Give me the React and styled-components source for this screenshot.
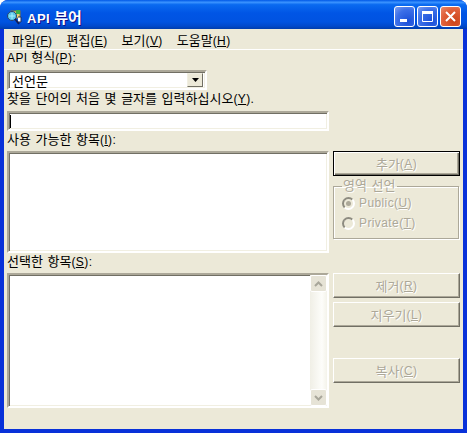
import React from 'react';
import styled, { createGlobalStyle } from 'styled-components';

const GlobalStyle = createGlobalStyle`
  html, body {
    margin: 0;
    padding: 0;
    background: #ffffff;
  }
`;

const FONT = '"Liberation Sans", "Noto Sans CJK KR", sans-serif';

const Window = styled.div`
  width: 467px;
  height: 433px;
  box-sizing: border-box;
  display: flex;
  flex-direction: column;
  overflow: hidden;
  border-radius: 8px 8px 0 0;
  background: #0831d9;
  font-family: ${FONT};
  font-size: 12px;
  letter-spacing: 0.4px;
  color: #000000;
`;

// Korean glyphs need a bigger size to get the advance of the bitmap font
const Ko = styled.span`
  font-size: ${props => props.$size || 13}px;
  letter-spacing: 0;
  word-spacing: 1px;
`;

const TitleBar = styled.div`
  height: 29px;
  flex: none;
  display: flex;
  align-items: center;
  padding: 4px 6px 0 6px;
  box-sizing: border-box;
  background: linear-gradient(180deg, #0058e6 0%, #3a93ff 8%, #0a6af0 16%, #0055e5 45%, #0053e1 75%, #0049cc 90%, #003dac 100%);
`;

const TitleText = styled.span`
  margin-left: 5px;
  flex: 1;
  color: #ffffff;
  font-weight: bold;
  font-size: 13px;
  letter-spacing: 0.5px;
  text-shadow: 1px 1px 0 #0f1089;
`;

const CaptionButton = styled.div`
  width: 21px;
  height: 21px;
  margin-left: 2px;
  box-sizing: border-box;
  border: 1px solid #ffffff;
  border-radius: 3px;
  display: flex;
  align-items: center;
  justify-content: center;
  background: ${props => (props.$close
    ? 'radial-gradient(circle at 70% 75%, #cc4419 0%, #e0603a 60%, #e98a6c 100%)'
    : 'radial-gradient(circle at 70% 75%, #1b4fd8 0%, #3c6fe8 60%, #7d9ff0 100%)')};
`;

const Body = styled.div`
  flex: 1;
  margin: 0 4px 4px;
  background: #ece9d8;
  display: flex;
  flex-direction: column;
  min-height: 0;
`;

const MenuBar = styled.div`
  height: 21px;
  flex: none;
  box-sizing: border-box;
  display: flex;
  align-items: center;
  padding-left: 1px;
  border-bottom: 1px solid #ffffff;
`;

const MenuItem = styled.span`
  padding: 0 7px;
  white-space: nowrap;
`;

const Content = styled.div`
  flex: 1;
  padding: 0 3px;
  display: flex;
  flex-direction: column;
`;

const FieldLabel = styled.div`
  height: 13px;
  line-height: 13px;
  white-space: nowrap;
  margin-top: ${props => props.$top || 0}px;
`;

const sunken = `
  box-sizing: border-box;
  border: 2px solid;
  border-color: #aca899 #ffffff #ffffff #aca899;
  box-shadow: inset 1px 1px 0 #716f64, inset -1px -1px 0 #f1efe2;
  background: #ffffff;
`;

const Combo = styled.div`
  ${sunken}
  width: 200px;
  height: 20px;
  margin-top: 6px;
  display: flex;
  align-items: center;
  justify-content: space-between;
  padding: 2px 2px 2px 3px;
`;

const ComboArrow = styled.div`
  width: 16px;
  height: 14px;
  box-sizing: border-box;
  background: #ece9d8;
  border: 1px solid;
  border-color: #f1efe2 #716f64 #716f64 #f1efe2;
  display: flex;
  align-items: center;
  justify-content: center;
`;

const TextInput = styled.div`
  ${sunken}
  width: 322px;
  height: 20px;
  margin-top: 6px;
  display: flex;
  align-items: center;
  padding-left: 1px;
`;

const Caret = styled.div`
  width: 1px;
  height: 13px;
  background: #000000;
`;

const Row = styled.div`
  display: flex;
  gap: 4px;
  margin-top: 5px;
`;

const ListBox = styled.div`
  ${sunken}
  width: 322px;
  height: ${props => props.$height}px;
  flex: none;
  display: flex;
  justify-content: flex-end;
`;

const ScrollTrack = styled.div`
  width: 17px;
  display: flex;
  flex-direction: column;
  justify-content: space-between;
  background: linear-gradient(90deg, #f0efe6 0%, #fdfdfa 70%, #f4f3ea 100%);
`;

const ScrollArrow = styled.div`
  height: 17px;
  box-sizing: border-box;
  border: 1px solid #ffffff;
  border-radius: 2px;
  background: #e6e3d6;
  display: flex;
  align-items: center;
  justify-content: center;
`;

const SideColumn = styled.div`
  width: 127px;
  display: flex;
  flex-direction: column;
`;

const DialogButton = styled.div`
  box-sizing: border-box;
  width: 127px;
  height: 25px;
  margin-top: ${props => props.$top || 0}px;
  display: flex;
  align-items: center;
  justify-content: center;
  white-space: pre;
  background: #ece9d8;
  color: #aca899;
  text-shadow: 1px 1px 0 #ffffff;
  border: 1px solid;
  border-color: ${props => (props.$default ? '#000000' : '#ffffff #716f64 #716f64 #ffffff')};
  box-shadow: ${props => (props.$default
    ? 'inset 1px 1px 0 #ffffff, inset -1px -1px 0 #716f64, inset -2px -2px 0 #aca899'
    : 'inset -1px -1px 0 #aca899')};
`;

const GroupBox = styled.fieldset`
  box-sizing: border-box;
  width: 126px;
  height: 59px;
  margin: 4px 0 0;
  padding: 1px 0 0 8px;
  border: 1px solid #aca899;
  box-shadow: 1px 1px 0 #ffffff, inset 1px 1px 0 #ffffff;
  display: flex;
  flex-direction: column;
`;

const GroupLegend = styled.legend`
  padding: 0 2px 0 1px;
  color: #aca899;
  text-shadow: 1px 1px 0 #ffffff;
  line-height: 12px;
`;

const RadioRow = styled.div`
  height: 20px;
  display: flex;
  align-items: center;
  gap: 4px;
  color: #aca899;
  text-shadow: 1px 1px 0 #ffffff;
`;

const RadioDot = styled.div`
  width: 13px;
  height: 13px;
  box-sizing: border-box;
  border-radius: 50%;
  border: 2px solid;
  border-color: #8d8b80 #ffffff #ffffff #8d8b80;
  background: #ece9d8;
  display: flex;
  align-items: center;
  justify-content: center;
`;

const RadioMark = styled.div`
  width: 5px;
  height: 5px;
  border-radius: 50%;
  background: #aca899;
`;

const TitleIcon = () => (
  <svg width="16" height="16" viewBox="0 0 16 16">
    <rect x="5" y="2" width="9" height="7" fill="#e8d070" stroke="#8a7a30" />
    <rect x="10" y="1" width="4" height="4" fill="#38b048" />
    <path d="M12 8h3v5h-3" fill="#ffffff" stroke="#20305a" />
    <circle cx="6" cy="7" r="4.5" fill="#5cc8e8" stroke="#27406e" />
    <path d="M3 7h6M6 4v6" stroke="#a8f0ff" />
    <path d="M9 10l4 5" stroke="#12205a" strokeWidth="2" />
  </svg>
);

const MinimizeIcon = () => (
  <svg width="13" height="13" viewBox="0 0 13 13">
    <rect x="2" y="9" width="7" height="3" fill="#ffffff" />
  </svg>
);

const MaximizeIcon = () => (
  <svg width="13" height="13" viewBox="0 0 13 13">
    <path d="M1.5 3.5h10v8h-10z" fill="none" stroke="#ffffff" />
    <rect x="1" y="1" width="11" height="3" fill="#ffffff" />
  </svg>
);

const CloseIcon = () => (
  <svg width="13" height="13" viewBox="0 0 13 13">
    <path d="M2 2l9 9M11 2l-9 9" stroke="#ffffff" strokeWidth="2" />
  </svg>
);

const ArrowDown = () => (
  <svg width="7" height="4" viewBox="0 0 7 4">
    <path d="M0 0h7L3.5 4z" fill="#000000" />
  </svg>
);

const Chevron = ({ up }) => (
  <svg width="9" height="6" viewBox="0 0 9 6">
    <path d={up ? 'M1 5l3.5-3.5L8 5' : 'M1 1l3.5 3.5L8 1'} fill="none" stroke="#a8a69a" strokeWidth="2" />
  </svg>
);

const App = () => (
  <>
    <GlobalStyle />
    <Window>
      <TitleBar>
        <TitleIcon />
        <TitleText>API <Ko $size={15}>뷰어</Ko></TitleText>
        <CaptionButton><MinimizeIcon /></CaptionButton>
        <CaptionButton><MaximizeIcon /></CaptionButton>
        <CaptionButton $close><CloseIcon /></CaptionButton>
      </TitleBar>
      <Body>
        <MenuBar>
          <MenuItem><Ko>파일</Ko>(<u>F</u>)</MenuItem>
          <MenuItem><Ko>편집</Ko>(<u>E</u>)</MenuItem>
          <MenuItem><Ko>보기</Ko>(<u>V</u>)</MenuItem>
          <MenuItem><Ko>도움말</Ko>(<u>H</u>)</MenuItem>
        </MenuBar>
        <Content>
          <FieldLabel $top={1}>API <Ko>형식</Ko>(<u>P</u>):</FieldLabel>
          <Combo>
            <Ko>선언문</Ko>
            <ComboArrow><ArrowDown /></ComboArrow>
          </Combo>
          <FieldLabel $top={2}><Ko>찾을 단어의 처음 몇 글자를 입력하십시오</Ko>(<u>Y</u>).</FieldLabel>
          <TextInput><Caret /></TextInput>
          <FieldLabel $top={2}><Ko>사용 가능한 항목</Ko>(<u>I</u>):</FieldLabel>
          <Row>
            <ListBox $height={102} />
            <SideColumn>
              <DialogButton $default><Ko>추가</Ko>(<u>A</u>)</DialogButton>
              <GroupBox>
                <GroupLegend><Ko>영역 선언</Ko></GroupLegend>
                <RadioRow>
                  <RadioDot><RadioMark /></RadioDot>
                  <span>Public(<u>U</u>)</span>
                </RadioRow>
                <RadioRow>
                  <RadioDot />
                  <span>Private(<u>T</u>)</span>
                </RadioRow>
              </GroupBox>
            </SideColumn>
          </Row>
          <FieldLabel $top={2}><Ko>선택한 항목</Ko>(<u>S</u>):</FieldLabel>
          <Row>
            <ListBox $height={135}>
              <ScrollTrack>
                <ScrollArrow><Chevron up /></ScrollArrow>
                <ScrollArrow><Chevron /></ScrollArrow>
              </ScrollTrack>
            </ListBox>
            <SideColumn>
              <DialogButton><Ko>제거</Ko>(<u>R</u>)</DialogButton>
              <DialogButton $top={4}><Ko>지우기</Ko>(<u>L</u>)</DialogButton>
              <DialogButton $top={31}><Ko>복사</Ko>(<u>C</u>)</DialogButton>
            </SideColumn>
          </Row>
        </Content>
      </Body>
    </Window>
  </>
);

export default App;
